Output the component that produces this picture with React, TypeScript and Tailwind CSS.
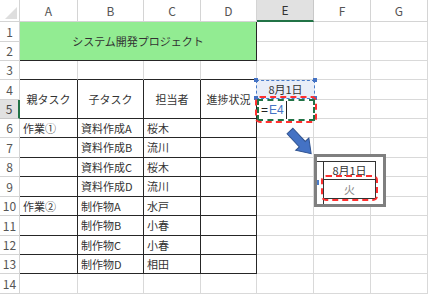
const cols = ['A', 'B', 'C', 'D', 'E', 'F', 'G'];

const tasks = [
  ['作業①', '資料作成A', '桜木'],
  ['', '資料作成B', '流川'],
  ['', '資料作成C', '桜木'],
  ['', '資料作成D', '流川'],
  ['作業②', '制作物A', '水戸'],
  ['', '制作物B', '小春'],
  ['', '制作物C', '小春'],
  ['', '制作物D', '相田'],
];

const grid = 'border-r border-b border-[#d9d9d9]';
const ink = 'border-r border-b border-[#262626]';

function RowHead({ n, sel = false }: { n: number; sel?: boolean }) {
  return (
    <div
      className={
        sel
          ? 'flex items-center justify-center border-b border-[#c8c8c8] border-r-2 border-r-[#217346] bg-[#e1e1e1] text-[12px] text-[#444]'
          : 'flex items-center justify-center border-r border-b border-[#d4d4d4] text-[12px] text-[#555]'
      }
    >
      {n}
    </div>
  );
}

function Blank() {
  return <div className={grid} />;
}

export default function App() {
  return (
    <div className="relative h-[300px] w-[434px] overflow-hidden bg-white font-['Noto_Sans_CJK_JP',sans-serif] text-[11px] text-[#333]">
      <div className="grid w-[428px] grid-cols-[20px_58px_66px_57px_56px_57px_57px_57px] grid-rows-[22px_20px_19px_19px_20px_19px_19px_20px_19px_20px_19px_20px_19px_19px_20px]">
        {/* column headers */}
        <div className="relative border-r border-b border-[#d4d4d4]">
          <svg className="absolute right-[2px] bottom-[2px]" width="12" height="12" viewBox="0 0 12 12">
            <polygon points="12,0 12,12 0,12" fill="#dedede" />
          </svg>
        </div>
        {cols.map((c) =>
          c === 'E' ? (
            <div
              key={c}
              className="flex items-center justify-center border-r border-[#c8c8c8] border-b-2 border-b-[#217346] bg-[#e1e1e1] text-[12px] text-[#333]"
            >
              {c}
            </div>
          ) : (
            <div
              key={c}
              className="flex items-center justify-center border-r border-b border-[#d4d4d4] text-[12px] text-[#555]"
            >
              {c}
            </div>
          )
        )}

        {/* rows 1-2: title */}
        <RowHead n={1} />
        <div className={`${ink} col-span-4 row-span-2 flex items-center justify-center bg-[#92ec92] text-[#333]`}>
          システム開発プロジェクト
        </div>
        <Blank />
        <Blank />
        <Blank />
        <RowHead n={2} />
        <Blank />
        <Blank />
        <Blank />

        {/* row 3 */}
        <RowHead n={3} />
        {[0, 1, 2, 3].map((i) => (
          <div key={i} className="border-r border-b border-r-[#d9d9d9] border-b-[#262626]" />
        ))}
        <Blank />
        <Blank />
        <Blank />

        {/* rows 4-5: table header */}
        <RowHead n={4} />
        {['親タスク', '子タスク', '担当者', '進捗状況'].map((h) => (
          <div key={h} className={`${ink} row-span-2 flex items-center justify-center`}>
            {h}
          </div>
        ))}
        <div className={`${grid} relative`}>
          <div className="absolute top-0 left-[-1px] flex h-[19px] w-[59px] items-center justify-center border border-dashed border-[#4a7cc9] bg-[#e9eef8] text-[#333]">
            8月1日
          </div>
          <div className="absolute top-[-2px] left-[-3px] h-[4px] w-[4px] bg-[#4472c4]" />
          <div className="absolute top-[-2px] left-[56px] h-[4px] w-[4px] bg-[#4472c4]" />
          <div className="absolute top-[16px] left-[-3px] h-[4px] w-[4px] bg-[#4472c4]" />
          <div className="absolute top-[16px] left-[56px] h-[4px] w-[4px] bg-[#4472c4]" />
        </div>
        <Blank />
        <Blank />
        <RowHead n={5} sel />
        <div className={`${grid} relative`}>
          <div className="absolute top-[-1px] left-0 flex h-[22px] w-[58px] items-center border-2 border-dashed border-[#217346] bg-white pl-[2px] font-['Liberation_Sans',sans-serif] text-[12px]">
            <span className="text-[#222]">=</span>
            <span className="ml-px text-[#4472c4]">E4</span>
            <span className="ml-[2px] h-full w-px bg-[#222]" />
          </div>
        </div>
        <Blank />
        <Blank />

        {/* rows 6-13 */}
        {tasks.map((t, i) => (
          <div key={i} className="contents">
            <RowHead n={i + 6} />
            {t.map((v, j) => (
              <div key={j} className={`${ink} flex items-center pl-[3px] whitespace-nowrap`}>
                {v}
              </div>
            ))}
            <div className={ink} />
            <Blank />
            <Blank />
            <Blank />
          </div>
        ))}

        {/* row 14 */}
        <RowHead n={14} />
        {cols.map((c) => (
          <Blank key={c} />
        ))}
      </div>

      {/* red dashed mark round E5 */}
      <div className="absolute top-[96px] left-[255px] h-[27px] w-[62px] rounded-[5px] border-2 border-dashed border-[#ff3030]" />

      {/* blue arrow */}
      <svg className="absolute top-[124px] left-[284px]" width="32" height="34" viewBox="0 0 32 34">
        <g transform="translate(6 7) rotate(47)">
          <polygon
            points="0,-4 18,-4 18,-9 31,0 18,9 18,4 0,4"
            fill="#4472c4"
            stroke="#2f528f"
            strokeWidth="1"
          />
        </g>
      </svg>

      {/* zoomed view */}
      <div className="absolute top-[154px] left-[314px] h-[53px] w-[72px] border-[3px] border-[#7f7f7f] bg-white">
        <div className="mt-[4px] flex h-[43px] w-[59px] border-t border-[#333]">
          <div className="relative w-[7px] border-r border-[#333]">
            <div className="absolute top-[18px] left-0 h-[5px] w-[2px] bg-[#4a7cc9]" />
          </div>
          <div className="flex w-[52px] flex-col">
            <div className="flex h-[17px] items-center justify-center border-r border-[#333] text-[#333]">8月1日</div>
            <div className="flex h-[20px] items-center justify-center border-y border-r border-[#333] text-[#8a8a8a]">火</div>
          </div>
        </div>
      </div>
      <div className="absolute top-[175px] left-[321px] h-[26px] w-[57px] rounded-[5px] border-2 border-dashed border-[#ff3030]" />
    </div>
  );
}
